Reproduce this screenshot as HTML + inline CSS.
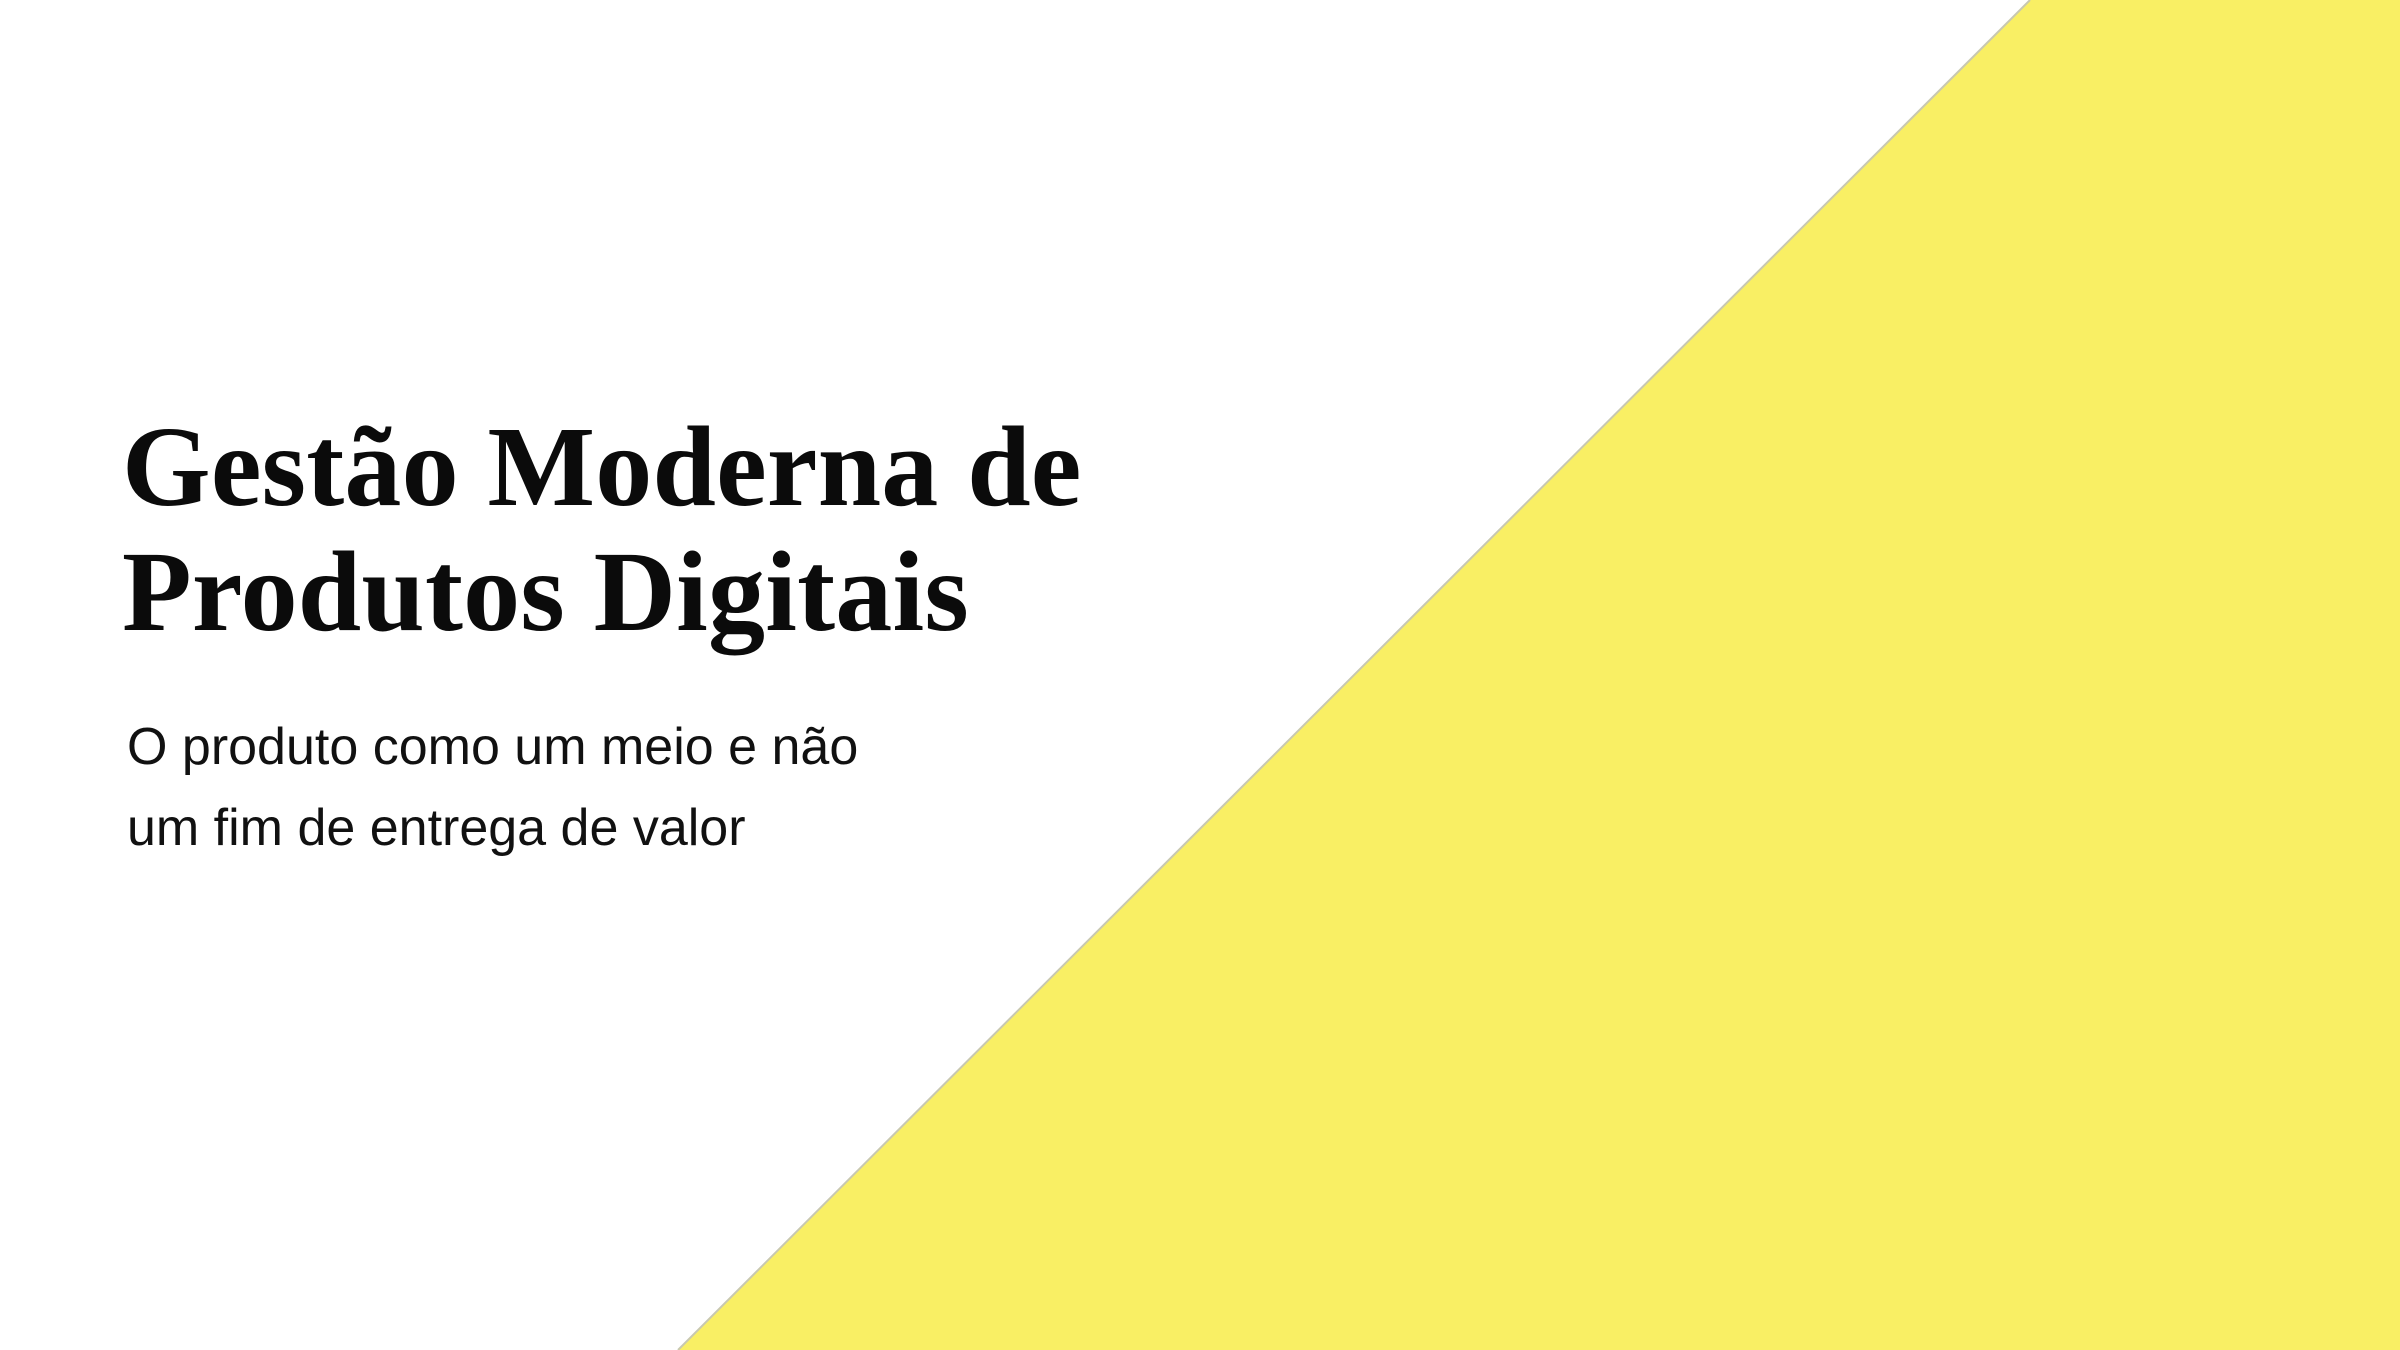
<!DOCTYPE html>
<html><head><meta charset="utf-8"><style>
html,body{margin:0;padding:0;width:2400px;height:1350px;overflow:hidden;background:#fff}
svg{position:absolute;left:0;top:0}
.t{position:absolute;left:122px;font-family:"Liberation Serif",serif;font-weight:bold;font-size:114px;color:#0b0b0b;white-space:nowrap;letter-spacing:0.2px;line-height:1}
.s{position:absolute;left:127px;font-family:"Liberation Sans",sans-serif;font-size:52px;color:#111;white-space:nowrap;line-height:1}
</style></head><body>
<svg width="2400" height="1350"><polygon points="2030,0 2400,0 2400,1350 678,1350" fill="#f9ef64"/><line x1="2030" y1="0" x2="678" y2="1350" stroke="#c8c8b0" stroke-width="2"/></svg>
<div class="t" style="top:410px">Gestão Moderna de</div>
<div class="t" style="top:535px">Produtos Digitais</div>
<div class="s" style="top:721px">O produto como um meio e não</div>
<div class="s" style="top:802px">um fim de entrega de valor</div>
</body></html>
